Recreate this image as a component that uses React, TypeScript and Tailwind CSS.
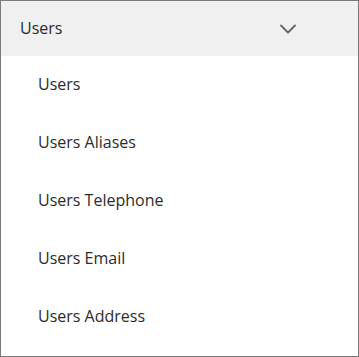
import { ChevronDown } from 'lucide-react';

const ITEMS = ['Users', 'Users Aliases', 'Users Telephone', 'Users Email', 'Users Address'];

export default function App() {
  return (
    <div className="h-[357px] w-[359px] bg-white font-['Open_Sans',sans-serif] text-[16px] text-[#2b2b2b]">
      <div className="flex h-full flex-col border border-[#7a7a7a]">
        {/* Header */}
        <button
          type="button"
          className="flex h-[55px] w-full items-center justify-between bg-[#f0f0f0] pl-[19px] pr-[56px] text-left"
        >
          <span className="-mt-px">Users</span>
          <ChevronDown className="h-7 w-7 text-[#666]" strokeWidth={1.6} />
        </button>

        {/* Items */}
        <ul className="flex flex-col">
          {ITEMS.map((item) => (
            <li key={item} className="flex h-[58px] items-center pb-[2px] pl-[37px]">
              {item}
            </li>
          ))}
        </ul>
      </div>
    </div>
  );
}
